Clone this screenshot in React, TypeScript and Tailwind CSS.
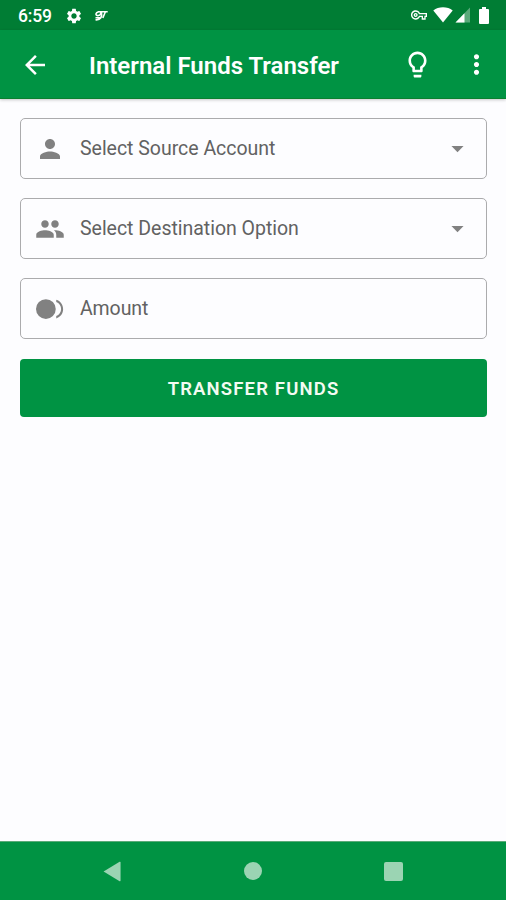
import type { ReactNode } from "react";
import {
  MdArrowBack,
  MdArrowDropDown,
  MdLightbulbOutline,
  MdMoreVert,
  MdOutlineVpnKey,
  MdPeople,
  MdPerson,
  MdSettings,
} from "react-icons/md";

interface FieldProps {
  icon: ReactNode;
  label: string;
  labelClass: string;
  dropdown?: boolean;
}

function CoinIcon() {
  return (
    <svg viewBox="0 0 24 24" className="w-[30px] h-[30px]" fill="currentColor">
      <circle cx="8.7" cy="12" r="7.9" />
      <path d="M20.9 12c0-2.61-1.57-4.83-3.9-5.65V4.5c3.25.89 5.5 3.9 5.5 7.5s-2.25 6.61-5.5 7.5v-1.85c2.33-.82 3.9-3.04 3.9-5.65z" />
    </svg>
  );
}

function StatusBar() {
  return (
    <div className="h-[30px] shrink-0 bg-[#007d34] flex items-center pl-[18px] pr-[17px] text-white">
      <span className="w-[47px] text-[17.5px] leading-[30px] font-medium tracking-[-0.2px] pt-[2px]">6:59</span>
      <MdSettings size={18} className="mt-px" />
      <svg viewBox="0 0 14 12" className="w-[14px] h-[12px] ml-[11px] mt-px" fill="none" stroke="currentColor" strokeWidth="1.6">
        <path d="M3.5 1.7H13.7M4.5 2C1.5 2.3 1 5.6 4 5.6S7 2.8 6.3 2M7.5 2C8.2 6.5 7 10.3 1.5 9.8M11.3 2L8.8 8M1.5 7.7h4.5" />
      </svg>
      <div className="flex-1" />
      <MdOutlineVpnKey size={16} />
      <svg viewBox="0 0 20 16" className="w-[20px] h-[16px] ml-[6px]" fill="currentColor">
        <path d="M10 15.5L.3 3.4C3 1.3 6.3.3 10 .3s7 1 9.7 3.1z" />
      </svg>
      <svg viewBox="0 0 16 16" className="w-[16px] h-[16px] ml-[2px]" fill="currentColor">
        <path d="M15 .5V15.5H.5z" opacity="0.35" />
        <path d="M9.5 6.2v9.3H.5z" />
      </svg>
      <svg viewBox="0 0 10 17" className="w-[10px] h-[17px] ml-[8px]" fill="currentColor">
        <path d="M3 0h4v2h2q1 0 1 1v13q0 1-1 1H1q-1 0-1-1V3q0-1 1-1h2z" />
      </svg>
    </div>
  );
}

function AppBar() {
  return (
    <header className="h-[69px] shrink-0 bg-[#009343] border-b border-[#0a802f] shadow-[0_1px_3px_rgba(0,0,0,0.22)] flex items-center pl-[20px] pr-[14px] pt-px text-white">
      <MdArrowBack size={30} />
      <h1 className="flex-1 ml-[39px] pt-[3px] text-[24px] font-semibold whitespace-nowrap">Internal Funds Transfer</h1>
      <MdLightbulbOutline size={31} />
      <MdMoreVert size={31} className="ml-[28px]" />
    </header>
  );
}

function Field({ icon, label, labelClass, dropdown }: FieldProps) {
  return (
    <div className="h-[61px] border-[1.5px] border-[#ababad] rounded-[5px] flex items-center pl-[14px] pr-[14px] text-[#818181]">
      {icon}
      <span className={`flex-1 ml-[15px] text-[19.5px] text-[#626262] whitespace-nowrap ${labelClass}`}>{label}</span>
      {dropdown && <MdArrowDropDown size={29} />}
    </div>
  );
}

function NavBar() {
  return (
    <nav className="h-[59px] shrink-0 bg-[#009343] border-t border-[#5aab78] flex items-center justify-between px-[103px] text-[#9bd4b3]">
      <svg viewBox="0 0 20 22" className="w-[19px] h-[21px]" fill="currentColor">
        <path d="M.6 11L17.5.8q1-.4 1 .7v19q0 1.1-1 .7z" />
      </svg>
      <div className="w-[18px] h-[18px] rounded-full bg-[#9bd4b3]" />
      <div className="w-[19px] h-[19px] rounded-[2px] bg-[#9bd4b3]" />
    </nav>
  );
}

export default function App() {
  return (
    <div className="w-full h-[900px] bg-[#fdfdff] flex flex-col overflow-hidden font-[Roboto,sans-serif]">
      <StatusBar />
      <AppBar />
      <main className="flex-1 flex flex-col gap-[19px] pt-[19px] pl-[20px] pr-[19px]">
        <Field icon={<MdPerson size={30} />} label="Select Source Account" labelClass="tracking-[-0.02px]" dropdown />
        <Field icon={<MdPeople size={30} />} label="Select Destination Option" labelClass="tracking-[-0.02px]" dropdown />
        <Field icon={<CoinIcon />} label="Amount" labelClass="tracking-[-0.1px]" />
        <button className="h-[58px] mt-px pt-[4px] rounded-[4px] bg-[#009343] text-[#f3fbf2] text-[18.5px] font-semibold tracking-[1.15px]">
          TRANSFER FUNDS
        </button>
      </main>
      <NavBar />
    </div>
  );
}
